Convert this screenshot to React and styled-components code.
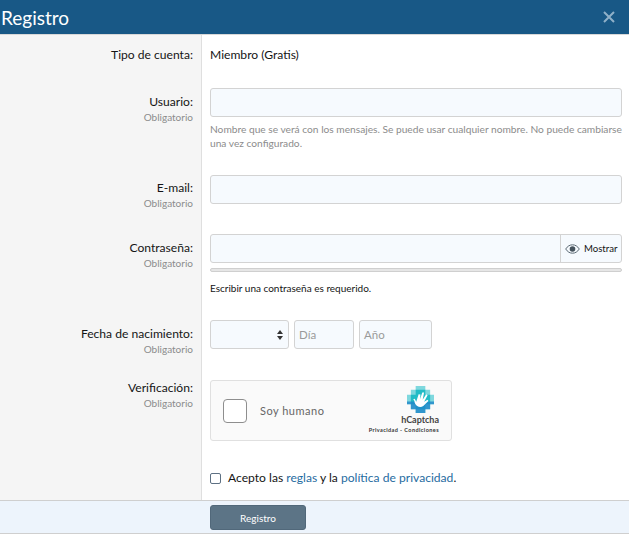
import React from "react";
import styled, { createGlobalStyle } from "styled-components";

const GlobalStyle = createGlobalStyle`
  html, body {
    margin: 0;
    padding: 0;
    background: #fff;
    font-family: Lato, "Open Sans", Arial, sans-serif;
    font-size: 12.1px;
    color: #141414;
  }
  * { box-sizing: border-box; }
`;

const Overlay = styled.div`
  width: 629px;
  height: 535px;
  overflow: hidden;
  background: #fff;
`;

const Header = styled.div`
  height: 35px;
  background: #185886;
  border-bottom: 1px solid #d8d8d8;
  display: flex;
  align-items: center;
  justify-content: space-between;
  padding: 0 14px 0 1px;
  color: #fff;
  font-size: 19px;
`;

const Close = styled.svg`
  width: 12px;
  height: 12px;
  stroke: #8fb0c8;
  stroke-width: 2;
  fill: none;
`;

const Form = styled.div`
  height: 465px;
  display: flex;
  flex-direction: column;
  background: linear-gradient(to right, #f5f5f5 201px, #dfdfdf 201px, #dfdfdf 202px, #fff 202px);
`;

const Row = styled.div`
  display: grid;
  grid-template-columns: 193px 1fr;
  column-gap: 17px;
  padding-right: 7px;
  height: ${(p) => p.$height}px;
  padding-top: ${(p) => p.$top}px;
`;

const Label = styled.div`
  text-align: right;
  padding-top: ${(p) => p.$top ?? 6}px;
  line-height: 16px;
`;

const Required = styled.div`
  font-size: 10px;
  color: #8c8c8c;
  line-height: 14px;
`;

const Value = styled.div`
  padding-top: 6px;
  line-height: 16px;
`;

const Input = styled.div`
  height: 29px;
  background: #f6fafe;
  border: 1px solid #d3d3d3;
  border-radius: 3px;
  flex: ${(p) => (p.$width ? "none" : 1)};
  width: ${(p) => (p.$width ? `${p.$width}px` : "auto")};
`;

const Hint = styled.div`
  font-size: 10.2px;
  color: #8c8c8c;
  line-height: 14px;
  margin-top: 5px;
  white-space: nowrap;
`;

const PasswordGroup = styled.div`
  display: flex;
  height: 29px;
  background: #f6fafe;
  border: 1px solid #d3d3d3;
  border-radius: 3px;
`;

const PasswordField = styled.div`
  flex: 1;
`;

const ShowButton = styled.div`
  width: 61px;
  border-left: 1px solid #d3d3d3;
  display: flex;
  align-items: center;
  gap: 4px;
  padding-left: 4px;
  font-size: 9.6px;
`;

const Meter = styled.div`
  height: 4px;
  margin-top: 5px;
  background: #e6e6e6;
  border: 1px solid #cfcfcf;
  border-radius: 2px;
`;

const MeterText = styled.div`
  font-size: 10px;
  line-height: 14px;
  margin-top: 9px;
`;

const DateRow = styled.div`
  display: flex;
  gap: 5px;
`;

const DateField = styled(Input)`
  display: flex;
  align-items: center;
  padding: 0 5px 0 4px;
  color: #9a9a9a;
  font-size: 11.5px;
  justify-content: ${(p) => (p.$select ? "flex-end" : "flex-start")};
`;

const Captcha = styled.div`
  width: 242px;
  height: 61px;
  background: #fafafa;
  border: 1px solid #e0e0e0;
  border-radius: 3px;
  display: flex;
  align-items: center;
  padding: 0 12px;
`;

const CaptchaBox = styled.div`
  width: 24px;
  height: 24px;
  background: #fff;
  border: 1px solid #8e8e8e;
  border-radius: 4px;
  margin-right: 13px;
`;

const CaptchaText = styled.div`
  flex: 1;
  font-size: 11px;
  letter-spacing: 0.5px;
  color: #666;
`;

const CaptchaBrand = styled.div`
  display: flex;
  flex-direction: column;
  align-items: flex-end;
  width: 74px;
  color: #444;
`;

const LogoWrap = styled.div`
  margin-right: 5px;
  height: 29px;
`;

const BrandName = styled.div`
  font-size: 9px;
  font-weight: 700;
  line-height: 10px;
`;

const BrandLinks = styled.div`
  font-size: 5.5px;
  font-weight: 700;
  line-height: 10px;
  letter-spacing: 0.42px;
  white-space: nowrap;
  color: #333;
`;

const Agree = styled.div`
  display: flex;
  align-items: center;
  align-self: start;
  gap: 7px;
  line-height: 16px;
  white-space: nowrap;
`;

const Check = styled.div`
  width: 11px;
  height: 11px;
  border: 1.5px solid #5d7083;
  border-radius: 2px;
  background: #fff;
`;

const RuleLink = styled.span`
  color: #1f6c9f;
`;

const Footer = styled.div`
  height: 34px;
  background: #edf4fc;
  border-top: 1px solid #cfcfcf;
  border-bottom: 1px solid #cfcfcf;
  padding: 4px 0 0 210px;
`;

const Submit = styled.div`
  width: 96px;
  height: 25px;
  background: #5c7486;
  border: 1px solid #51687a;
  border-radius: 3px;
  color: #fff;
  font-size: 10px;
  display: flex;
  align-items: center;
  justify-content: center;
`;

const EyeIcon = () => (
  <svg width="15" height="10" viewBox="0 0 15 10">
    <path d="M.7 5C2.5 2.2 4.8.8 7.5.8s5 1.4 6.800 4.200c-1.800 2.800-4.100 4.200-6.800 4.200S2.500 7.800.7 5z" fill="none" stroke="#5a6872" strokeWidth="1" />
    <circle cx="7.5" cy="5" r="2.800" fill="#45525c" />
  </svg>
);

const SelectArrows = () => (
  <svg width="6" height="10" viewBox="0 0 6 10">
    <path d="M3 0l3 4H0zM3 10L0 6h6z" fill="#333" />
  </svg>
);

const HCaptchaLogo = () => (
  <svg width="27" height="27" viewBox="0 0 28 28">
    <path d="M9 0h10v4h5v5h4v10h-4v5h-5v4H9v-4H4v-5H0V9h4V4h5z" fill="#7fd8de" />
    <path d="M9 4h10v5h5v10h-5v5H9v-5H4V9h5z" fill="#22bcc6" />
    <path d="M0 16h28v3h-4v5h-5v4H9v-4H4v-5H0z" fill="#1f86c8" opacity="0.8" />
    <g transform="rotate(18 14 14)">
      <path d="M8 15l2.500 2.500V9.500l1.800-.5L13.500 14V6.500L15.300 6l.9 7.500 1.700-6.500 1.700.5-1.300 7.500 2.700-3 1.300 1-3.500 6.500c-1.500 2-3.800 2.500-6 2-2-.5-3.500-2-4.300-4L6.800 16z" fill="#fff" />
    </g>
  </svg>
);

export default function App() {
  return (
    <Overlay>
      <GlobalStyle />
      <Header>
        Registro
        <Close viewBox="0 0 12 12">
          <path d="M1 1l10 10M11 1L1 11" />
        </Close>
      </Header>
      <Form>
        <Row $height={53} $top={6}>
          <Label>Tipo de cuenta:</Label>
          <Value>Miembro (Gratis)</Value>
        </Row>
        <Row $height={87} $top={0}>
          <Label $top={6}>
            Usuario:
            <Required>Obligatorio</Required>
          </Label>
          <div>
            <Input />
            <Hint>
              Nombre que se verá con los mensajes. Se puede usar cualquier nombre. No puede cambiarse
              <br />
              una vez configurado.
            </Hint>
          </div>
        </Row>
        <Row $height={59} $top={0}>
          <Label $top={5}>
            E-mail:
            <Required>Obligatorio</Required>
          </Label>
          <Input />
        </Row>
        <Row $height={86} $top={0}>
          <Label $top={6}>
            Contraseña:
            <Required>Obligatorio</Required>
          </Label>
          <div>
            <PasswordGroup>
              <PasswordField />
              <ShowButton>
                <EyeIcon />
                Mostrar
              </ShowButton>
            </PasswordGroup>
            <Meter />
            <MeterText>Escribir una contraseña es requerido.</MeterText>
          </div>
        </Row>
        <Row $height={60} $top={0}>
          <Label $top={6}>
            Fecha de nacimiento:
            <Required>Obligatorio</Required>
          </Label>
          <DateRow>
            <DateField $width={79} $select>
              <SelectArrows />
            </DateField>
            <DateField $width={60}>Día</DateField>
            <DateField $width={73}>Año</DateField>
          </DateRow>
        </Row>
        <Row $height={90} $top={0}>
          <Label $top={0}>
            Verificación:
            <Required>Obligatorio</Required>
          </Label>
          <Captcha>
            <CaptchaBox />
            <CaptchaText>Soy humano</CaptchaText>
            <CaptchaBrand>
              <LogoWrap>
                <HCaptchaLogo />
              </LogoWrap>
              <BrandName>hCaptcha</BrandName>
              <BrandLinks>Privacidad - Condiciones</BrandLinks>
            </CaptchaBrand>
          </Captcha>
        </Row>
        <Row $height={30} $top={0}>
          <div />
          <Agree>
            <Check />
            <span>
              Acepto las <RuleLink>reglas</RuleLink> y la <RuleLink>política de privacidad</RuleLink>.
            </span>
          </Agree>
        </Row>
      </Form>
      <Footer>
        <Submit>Registro</Submit>
      </Footer>
    </Overlay>
  );
}
